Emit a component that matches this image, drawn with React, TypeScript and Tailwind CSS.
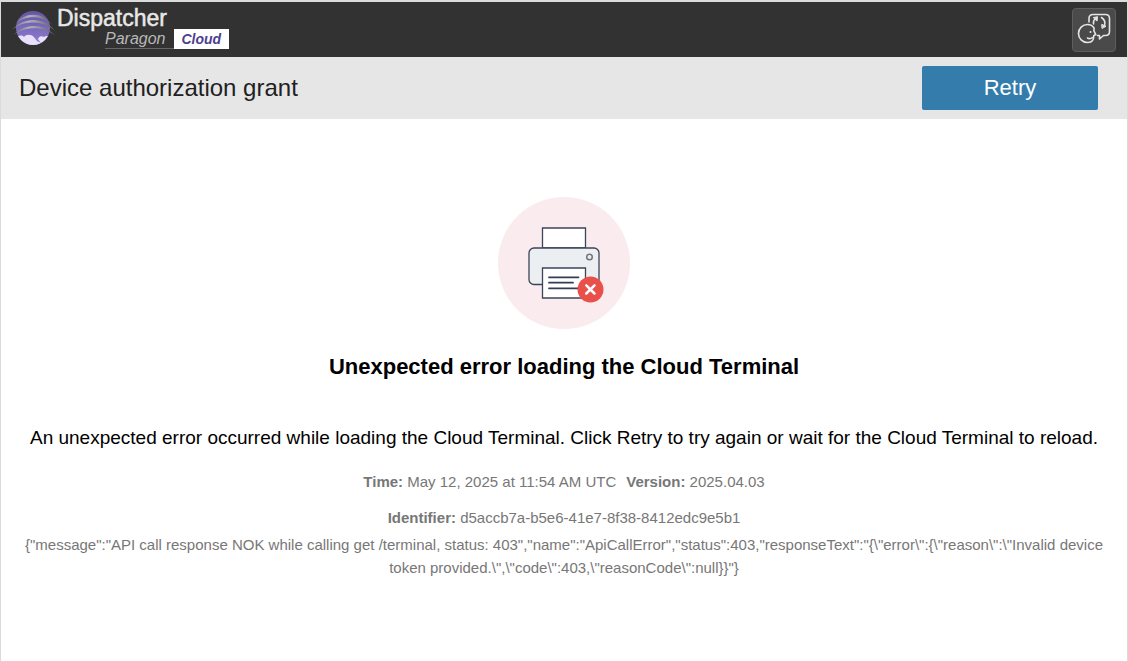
const RESPONSE =
  '{"message":"API call response NOK while calling get /terminal, status: 403","name":"ApiCallError","status":403,"responseText":"{\\"error\\":{\\"reason\\":\\"Invalid device token provided.\\",\\"code\\":403,\\"reasonCode\\":null}}"}'

function LogoMark() {
  return (
    <svg width="46" height="40" viewBox="0 0 46 40" fill="none" aria-hidden="true">
      <defs>
        <linearGradient id="sphere" x1="0" y1="0" x2="0" y2="1">
          <stop offset="0" stopColor="#6655a6" />
          <stop offset="1" stopColor="#8f7dd2" />
        </linearGradient>
        <linearGradient id="band" x1="0" y1="0" x2="1" y2="0">
          <stop offset="0" stopColor="#77757d" />
          <stop offset="0.4" stopColor="#b4b1bd" />
          <stop offset="1" stopColor="#5c5a62" />
        </linearGradient>
        <clipPath id="disc">
          <circle cx="22" cy="20" r="17" />
        </clipPath>
      </defs>
      <circle cx="22" cy="20" r="17" fill="url(#sphere)" />
      <path
        clipPath="url(#disc)"
        fill="#e9e0fb"
        d="M5 30c3-3 6-3 8-1 2-3 7-3 10 0l4 3c0-3 3-5 6-3 2-2 5-1 8 1v9H5z"
      />
      <path d="M22 28l4 2 4 5-4-2z" fill="#8d7bcf" />
      <g fill="url(#band)">
        <path d="M4 16C13 4 32 3 41 17 31 7 14 7 4 16z" />
        <path d="M1 22C12 9 33 8 44 23 32 12 13 12 1 22z" />
        <path d="M3 27C13 15 34 15 44 28 33 18 14 18 3 27z" />
      </g>
    </svg>
  )
}

function Logo() {
  return (
    <div className="flex items-start">
      <LogoMark />
      <div className="text-[#e8e8e8]">
        <div className="text-[23px] leading-[21px] [-webkit-text-stroke:0.5px_#e8e8e8]">Dispatcher</div>
        <div className="flex pl-12">
          <div className="border-b border-[#666666] pr-2 text-base leading-[19px] text-[#b8b8b8] italic">
            Paragon
          </div>
          <div className="bg-white px-2 text-sm leading-5 font-bold text-[#4d3f8f] italic">Cloud</div>
        </div>
      </div>
    </div>
  )
}

function LanguageIcon() {
  return (
    <svg
      width="36"
      height="36"
      viewBox="0 0 36 36"
      fill="none"
      stroke="#e4e4e4"
      strokeWidth="1.6"
      strokeLinecap="round"
      strokeLinejoin="round"
      aria-hidden="true"
    >
      {/* speech bubble */}
      <path d="M13 10V6.500q0-4 4-4h12.500q4 0 4 4v13q0 4-4 4h-2l-4 3.500v-3.500h-2" />
      {/* face in profile */}
      <path d="M18 16C16.500 13.500 14 12.500 11.500 12.500a9 9 0 1 0 0 18c3.500 0 5.500-1.200 6-4.400l.3-2.600 2-.9-1.800-3.500z" />
      <path d="M11.500 26q2.500 1.500 5-.5" />
      <circle cx="14.500" cy="20" r="1" fill="#e4e4e4" stroke="none" />
      {/* rotating arrows */}
      <path d="M17.500 12q-.5-3.500 2-5.500M25.500 5.500q4.500 3 3 8" />
      <path d="M17.500 5.500l4-.8-.4 4zM26 12.500l4 1.800-3.700 2z" fill="#e4e4e4" strokeWidth="1" />
    </svg>
  )
}

function PrinterError() {
  return (
    <svg width="132" height="132" viewBox="0 0 132 132" fill="none" aria-hidden="true">
      <circle cx="66" cy="66" r="66" fill="#faebee" />
      <g stroke="#3c4459" strokeWidth="1.300">
        <path fill="#fff" d="M44.500 31h43v20h-43z" />
        <rect x="31" y="51" width="70" height="36.500" rx="5" fill="#eceff1" />
        <path fill="#fff" d="M44.500 71h43v30h-43z" />
      </g>
      <circle cx="91.500" cy="60" r="2.800" stroke="#70757f" strokeWidth="1.500" />
      <path
        d="M51 80.300h29.500M51 85.700h24M51 91.300h29.500"
        stroke="#333d55"
        strokeWidth="1.800"
        strokeLinecap="round"
      />
      <circle cx="92.500" cy="92.500" r="13" fill="#e9504a" />
      <path d="M88.300 88.300l8.200 8.200M96.500 88.300l-8.200 8.200" stroke="#fff" strokeWidth="2.500" strokeLinecap="round" />
    </svg>
  )
}

export default function App() {
  return (
    <div className="min-h-screen border-x border-t-2 border-[#d9dbdc] bg-white font-['Liberation_Sans',Arial,sans-serif] text-black">
      <header className="flex items-start justify-between bg-[#323232] pt-1.5 pr-[11px] pb-[5px] pl-2.5">
        <Logo />
        <button
          type="button"
          aria-label="Change language"
          className="flex size-11 items-center justify-center rounded-sm border border-[#5e5e5e] bg-[#4a4a4a]"
        >
          <LanguageIcon />
        </button>
      </header>

      <div className="flex items-center justify-between bg-[#e6e6e6] py-[9px] pr-[29px] pl-[18px]">
        <h1 className="text-2xl text-[#212121]">Device authorization grant</h1>
        <button type="button" className="h-11 w-44 rounded-xs bg-[#347cab] pb-0.5 text-[22px] text-white">
          Retry
        </button>
      </div>

      <main className="flex flex-col items-center px-5 pt-[78px] text-center">
        <PrinterError />
        <h2 className="mt-6 text-[22px] leading-7 font-bold">Unexpected error loading the Cloud Terminal</h2>
        <p className="mt-[43px] text-[19px] leading-7">
          An unexpected error occurred while loading the Cloud Terminal. Click Retry to try again or wait for the
          Cloud Terminal to reload.
        </p>
        <div className="mt-[18px] text-[15px] leading-[23px] text-[#777777]">
          <p className="flex justify-center gap-2.5">
            <span>
              <strong>Time:</strong> May 12, 2025 at 11:54 AM UTC
            </span>
            <span>
              <strong>Version:</strong> 2025.04.03
            </span>
          </p>
          <p className="mt-[13px]">
            <strong>Identifier:</strong> d5accb7a-b5e6-41e7-8f38-8412edc9e5b1
          </p>
          <p className="mt-1">{RESPONSE}</p>
        </div>
      </main>
    </div>
  )
}
